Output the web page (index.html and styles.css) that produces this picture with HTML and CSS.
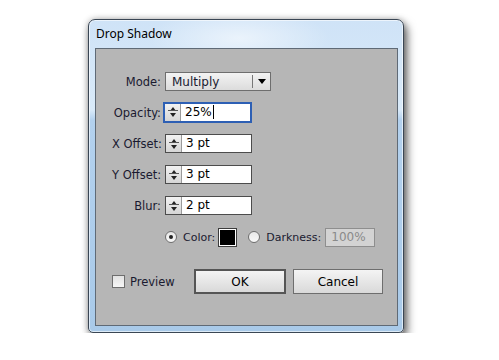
FILE: index.html
```html
<!DOCTYPE html>
<html lang="en">

<head>
    <meta charset="UTF-8">
    <title>Drop Shadow</title>
    <link rel="stylesheet" href="styles.css">
</head>

<body>
    <div class="window">
        <div class="title">Drop Shadow</div>

        <div class="panel">
            <div class="fields">
                <label class="field-label">Mode:</label>
                <div class="select">
                    <span class="select-text">Multiply</span>
                    <span class="select-arrow"></span>
                </div>

                <label class="field-label">Opacity:</label>
                <div class="spin focused">
                    <span class="spin-btn"><i class="up"></i><i class="down"></i></span>
                    <span class="spin-value">25%<span class="caret"></span></span>
                </div>

                <label class="field-label">X Offset:</label>
                <div class="spin">
                    <span class="spin-btn"><i class="up"></i><i class="down"></i></span>
                    <span class="spin-value">3 pt</span>
                </div>

                <label class="field-label">Y Offset:</label>
                <div class="spin">
                    <span class="spin-btn"><i class="up"></i><i class="down"></i></span>
                    <span class="spin-value">3 pt</span>
                </div>

                <label class="field-label">Blur:</label>
                <div class="spin">
                    <span class="spin-btn"><i class="up"></i><i class="down"></i></span>
                    <span class="spin-value">2 pt</span>
                </div>

                <div class="color-row">
                    <span class="radio checked"></span>
                    <span class="opt-label">Color:</span>
                    <span class="swatch"></span>
                    <span class="radio"></span>
                    <span class="opt-label">Darkness:</span>
                    <span class="disabled-input">100%</span>
                </div>
            </div>

            <div class="actions">
                <span class="checkbox"></span>
                <span class="check-label">Preview</span>
                <button class="btn default">OK</button>
                <button class="btn">Cancel</button>
            </div>
        </div>
    </div>
</body>

</html>
```

FILE: styles.css
```css
body {
    margin: 0;
    background-color: #fff;
    font-family: "DejaVu Sans", Tahoma, sans-serif;
    font-size: 11.5px;
    color: #1a1a30;
}

.window {
    margin: 19px 0 0 88px;
    width: 314px;
    height: 312px;
    border: 1px solid #3a4654;
    border-radius: 7px 7px 5px 5px;
    background:
        radial-gradient(ellipse 90px 30px at 150px 18px, rgba(255, 255, 255, 0.55), rgba(255, 255, 255, 0)),
        linear-gradient(to bottom, #cfe3f7 0, #d9eaf9 90px, #b3d1ee 100px, #a9cae9 100%);
    box-shadow: 3px 5px 10px rgba(0, 0, 0, 0.6), 0 0 6px rgba(0, 0, 0, 0.25), inset 0 0 0 1px rgba(255, 255, 255, 0.6);
    display: flex;
    flex-direction: column;
}

.title {
    height: 28px;
    padding-left: 7px;
    line-height: 28px;
    font-family: "Noto Sans", "Segoe UI", sans-serif;
    font-size: 12px;
    color: #000;
}

.panel {
    margin: 0 5px 6px 6px;
    flex: 1;
    border: 1px solid #5f6a76;
    background-color: #b6b6b6;
    padding: 23px 0 0 16px;
    display: flex;
    flex-direction: column;
}

.fields {
    display: grid;
    grid-template-columns: 49px auto;
    grid-auto-rows: 19px;
    column-gap: 4px;
    row-gap: 12px;
    align-items: center;
}

.field-label {
    text-align: right;
    white-space: nowrap;
}

.select {
    width: 104px;
    height: 17px;
    border: 1px solid #6e6e6e;
    background: linear-gradient(to bottom, #f3f3f3, #dcdcdc);
    display: flex;
    align-items: center;
}

.select-text {
    flex: 1;
    padding-left: 6px;
    font-size: 12px;
}

.select-arrow {
    width: 17px;
    height: 13px;
    border-left: 1px solid #777;
    position: relative;
}

.select-arrow::after {
    content: "";
    position: absolute;
    left: 5px;
    top: 4px;
    border-left: 4px solid transparent;
    border-right: 4px solid transparent;
    border-top: 5px solid #000;
}

.spin {
    width: 85px;
    height: 17px;
    border: 1px solid #4c4c4c;
    background-color: #fff;
    display: flex;
}

.spin.focused {
    width: 85px;
    height: 17px;
    border: 2px solid #2d5fb4;
    margin-left: -2px;
    margin-top: -1px;
}

.spin-btn {
    width: 15px;
    border-right: 1px solid #9a9a9a;
    background: linear-gradient(to bottom, #f2f2f2, #d6d6d6);
    display: flex;
    flex-direction: column;
    align-items: center;
    justify-content: center;
    gap: 2px;
}

.spin-btn i {
    display: block;
    width: 0;
    height: 0;
    border-left: 3px solid transparent;
    border-right: 3px solid transparent;
}

.spin-btn .up {
    border-bottom: 4px solid #222;
}

.spin-btn .down {
    border-top: 4px solid #222;
    position: relative;
}

.spin-btn .down::before {
    content: "";
    position: absolute;
    left: -5px;
    top: -7px;
    width: 10px;
    border-top: 1px solid #555;
}

.spin-value {
    padding-left: 4px;
    line-height: 17px;
    font-size: 12px;
    color: #000;
    display: flex;
    align-items: center;
}

.caret {
    width: 1px;
    height: 14px;
    margin-left: 1px;
    background-color: #000;
}

.color-row {
    grid-column: 2;
    display: flex;
    align-items: center;
    margin-top: 1px;
}

.radio {
    width: 10px;
    height: 10px;
    border: 1px solid #6f6f6f;
    border-radius: 50%;
    background: linear-gradient(to bottom, #e8e8e8, #f8f8f8);
    position: relative;
}

.radio.checked::after {
    content: "";
    position: absolute;
    left: 3px;
    top: 3px;
    width: 4px;
    height: 4px;
    border-radius: 50%;
    background-color: #222;
}

.opt-label {
    margin-left: 6px;
    margin-right: 4px;
    font-size: 11px;
}

.swatch {
    width: 15px;
    height: 15px;
    background-color: #000;
    border: 1px solid #fff;
    outline: 1px solid #3c3c3c;
    margin-right: 12px;
}

.disabled-input {
    width: 43px;
    height: 17px;
    border: 1px solid #8e8e8e;
    background-color: #d3d3d3;
    color: #8a8a8a;
    padding-left: 5px;
    line-height: 17px;
    font-size: 12px;
}

.actions {
    margin-top: 23px;
    display: flex;
    align-items: center;
}

.checkbox {
    width: 11px;
    height: 11px;
    border: 1px solid #6e6e6e;
    background: linear-gradient(to bottom, #e2e2e2, #f6f6f6);
}

.check-label {
    margin-left: 5px;
    width: 64px;
}

.btn {
    width: 90px;
    height: 25px;
    border: 1px solid #6e6e6e;
    background: linear-gradient(to bottom, #f4f4f4, #d9d9d9);
    font-family: "DejaVu Sans", Tahoma, sans-serif;
    font-size: 12px;
    color: #000;
    padding: 0;
    margin-right: 7px;
}

.btn.default {
    border: 2px solid #555;
    width: 92px;
}
```
